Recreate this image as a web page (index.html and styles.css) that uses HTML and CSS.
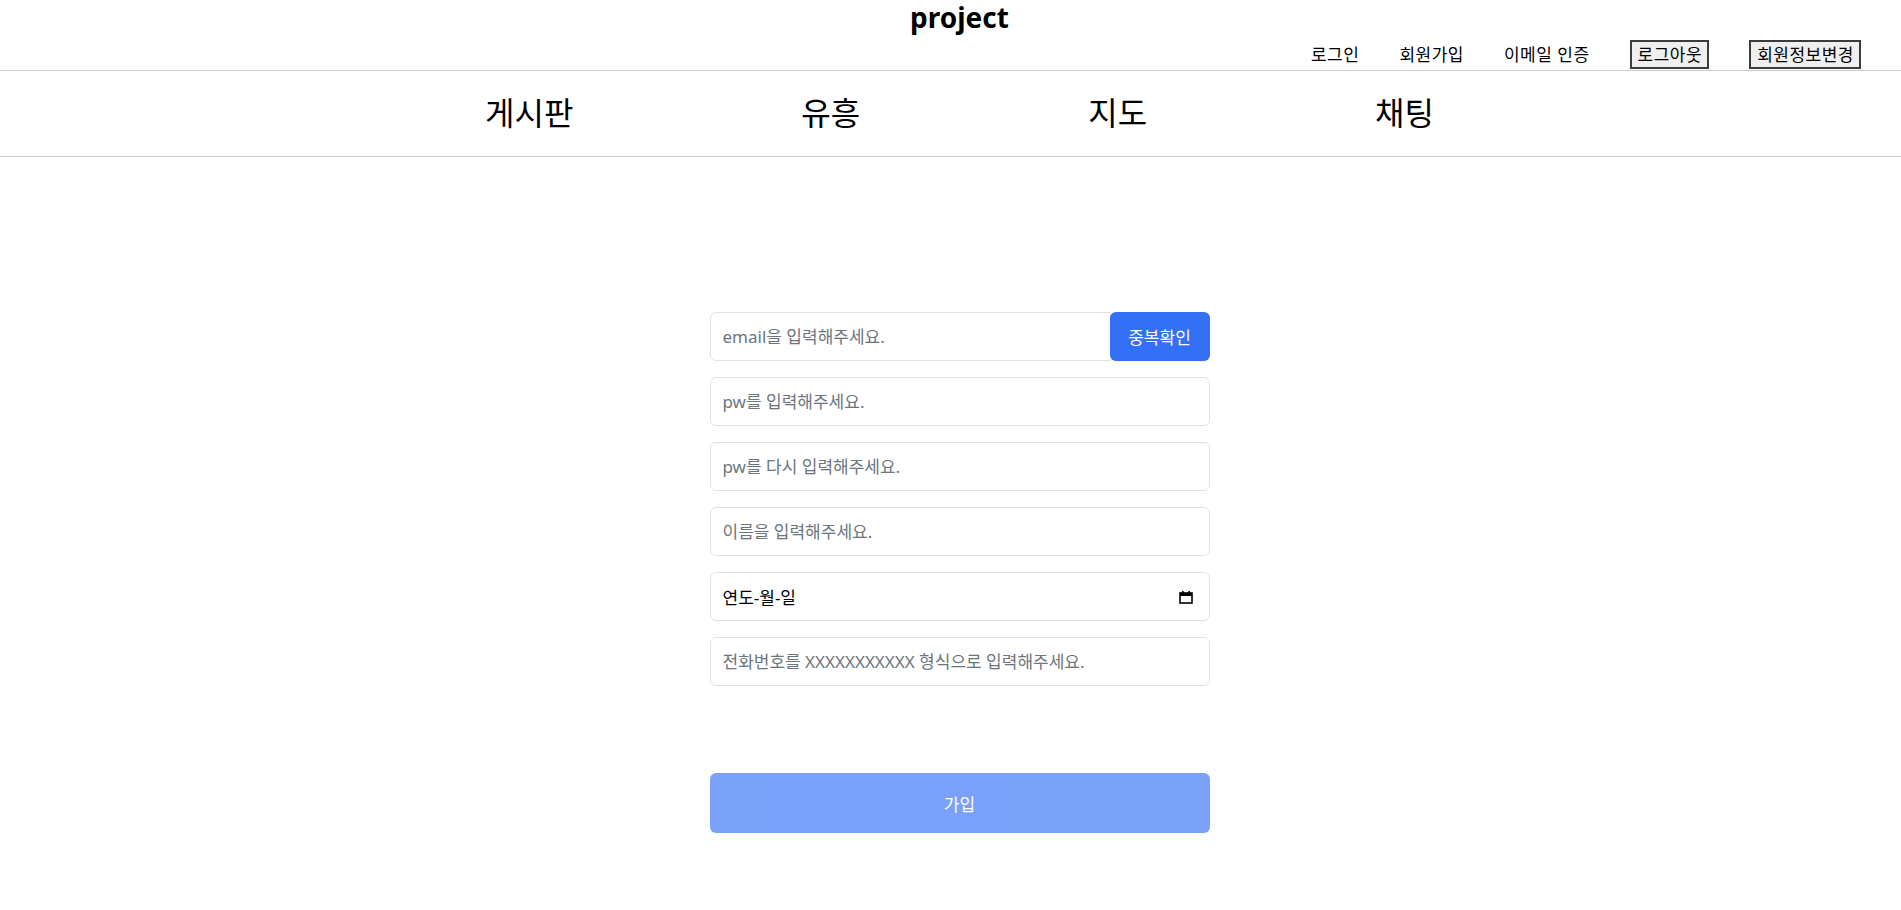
FILE: index.html
```html
<!DOCTYPE html>
<html lang="ko">
<head>
<meta charset="utf-8">
<title>project</title>
<link rel="stylesheet" href="styles.css">
</head>
<body>
<header class="top">
  <h1 class="brand">project</h1>
  <div class="account">
    <a class="account-link" href="#">로그인</a>
    <a class="account-link" href="#">회원가입</a>
    <a class="account-link" href="#">이메일 인증</a>
    <button class="account-btn" type="button">로그아웃</button>
    <button class="account-btn" type="button">회원정보변경</button>
  </div>
</header>
<nav class="menu">
  <a class="menu-item" href="#">게시판</a>
  <a class="menu-item" href="#">유흥</a>
  <a class="menu-item" href="#">지도</a>
  <a class="menu-item" href="#">채팅</a>
</nav>
<main class="page">
  <form class="join-form">
    <div class="field-group">
      <input class="field field-grouped" type="text" placeholder="email을 입력해주세요.">
      <button class="check-btn" type="button">중복확인</button>
    </div>
    <input class="field" type="password" placeholder="pw를 입력해주세요.">
    <input class="field" type="password" placeholder="pw를 다시 입력해주세요.">
    <input class="field" type="text" placeholder="이름을 입력해주세요.">
    <div class="field date-field">
      <span class="date-text">연도-월-일</span>
      <svg class="cal-icon" width="14" height="14" viewBox="0 0 14 14" aria-hidden="true">
        <rect x="1" y="3" width="12" height="10" fill="none" stroke="#000" stroke-width="1.6"/>
        <rect x="1" y="3" width="12" height="3" fill="#000"/>
        <rect x="3" y="1" width="1.6" height="3" fill="#000"/>
        <rect x="9.4" y="1" width="1.6" height="3" fill="#000"/>
      </svg>
    </div>
    <input class="field" type="text" placeholder="전화번호를 XXXXXXXXXXX 형식으로 입력해주세요.">
    <button class="join-btn" type="button" disabled>가입</button>
  </form>
</main>
</body>
</html>
```
FILE: styles.css
```css
* { box-sizing: border-box; }

body {
  margin: 0;
  font-family: "Noto Sans", "Noto Sans CJK KR", sans-serif;
  color: #000;
  background: #fff;
}

.top {
  border-bottom: 1px solid #cccccc;
}

.brand {
  margin: 0;
  height: 40px;
  padding-left: 18px;
  text-align: center;
  font-size: 28px;
  font-weight: 700;
  line-height: 34px;
}

.account {
  display: flex;
  justify-content: flex-end;
  align-items: center;
  gap: 40px;
  height: 30px;
  padding: 0 40px 1px 0;
}

.account-link {
  color: #000;
  text-decoration: none;
  font-size: 17px;
  letter-spacing: 0.5px;
  line-height: 23px;
}

.account-btn {
  font-family: inherit;
  font-size: 17px;
  letter-spacing: 0.5px;
  line-height: 23px;
  padding: 0 5px 0 6px;
  height: 29px;
  background: #efefef;
  border: 2px solid #3c3c3c;
  border-radius: 0;
  color: #000;
}

.menu {
  display: flex;
  justify-content: center;
  align-items: center;
  gap: 228px;
  height: 86px;
  padding: 0 0 2px 18px;
  border-bottom: 1px solid #cccccc;
}

.menu-item {
  color: #000;
  text-decoration: none;
  font-size: 32px;
  line-height: 40px;
}

.page {
  display: flex;
  justify-content: center;
  padding: 155px 0 60px 18px;
}

.join-form {
  width: 500px;
  display: flex;
  flex-direction: column;
  gap: 16px;
}

.field-group {
  display: flex;
}

.field {
  width: 100%;
  height: 49px;
  padding: 0 12px;
  border: 1px solid #dee2e6;
  border-radius: 6px;
  font-family: inherit;
  font-size: 17px;
  color: #212529;
  background: #fff;
  outline: none;
}

.field::placeholder {
  color: #6c757d;
}

.field-grouped {
  flex: 1;
  border-top-right-radius: 0;
  border-bottom-right-radius: 0;
}

.check-btn {
  flex: 0 0 100px;
  height: 49px;
  margin-left: -1px;
  border: none;
  border-radius: 6px;
  background: #3370f6;
  color: #fff;
  font-family: inherit;
  font-size: 17px;
}

.date-field {
  display: flex;
  align-items: center;
  justify-content: space-between;
  padding-right: 16px;
}

.date-text {
  color: #000;
}

.cal-icon {
  display: block;
}

.join-btn {
  margin-top: 71px;
  height: 60px;
  width: 100%;
  border: none;
  border-radius: 6px;
  background: #3370f6;
  opacity: 0.65;
  color: #fff;
  font-family: inherit;
  font-size: 17px;
}
```
